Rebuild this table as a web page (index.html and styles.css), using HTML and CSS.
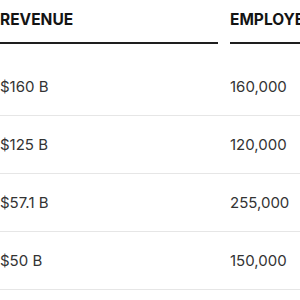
FILE: index.html
```html
<!DOCTYPE html>
<html>
<head>
<meta charset="utf-8">
<link rel="stylesheet" href="styles.css">
</head>
<body>
<div class="table">
  <div class="row head">
    <div class="th">REVENUE</div>
    <div class="th">EMPLOYEES</div>
  </div>
  <div class="row">
    <div class="td">$160 B</div>
    <div class="td">160,000</div>
  </div>
  <div class="row">
    <div class="td">$125 B</div>
    <div class="td">120,000</div>
  </div>
  <div class="row">
    <div class="td">$57.1 B</div>
    <div class="td">255,000</div>
  </div>
  <div class="row">
    <div class="td">$50 B</div>
    <div class="td">150,000</div>
  </div>
</div>
</body>
</html>
```
FILE: styles.css
```css
html, body {
  margin: 0;
  padding: 0;
  background: #ffffff;
  overflow: hidden;
}
body {
  width: 300px;
  height: 300px;
}
.table {
  width: 520px;
  font-family: Inter, "Noto Sans", sans-serif;
}
.row {
  display: grid;
  grid-template-columns: 218px 1fr;
  column-gap: 12px;
  height: 58px;
  align-items: center;
  border-bottom: 1px solid #e6e6e6;
  box-sizing: border-box;
}
.row.head {
  height: auto;
  align-items: stretch;
  border-bottom: none;
  margin-bottom: 14px;
}
.th {
  font-weight: 700;
  font-size: 15.5px;
  line-height: 20px;
  color: #141414;
  padding-top: 10px;
  padding-bottom: 12px;
  border-bottom: 2px solid #1e1e1e;
  white-space: nowrap;
}
.td {
  font-size: 15px;
  line-height: 20px;
  color: #333333;
}
```
